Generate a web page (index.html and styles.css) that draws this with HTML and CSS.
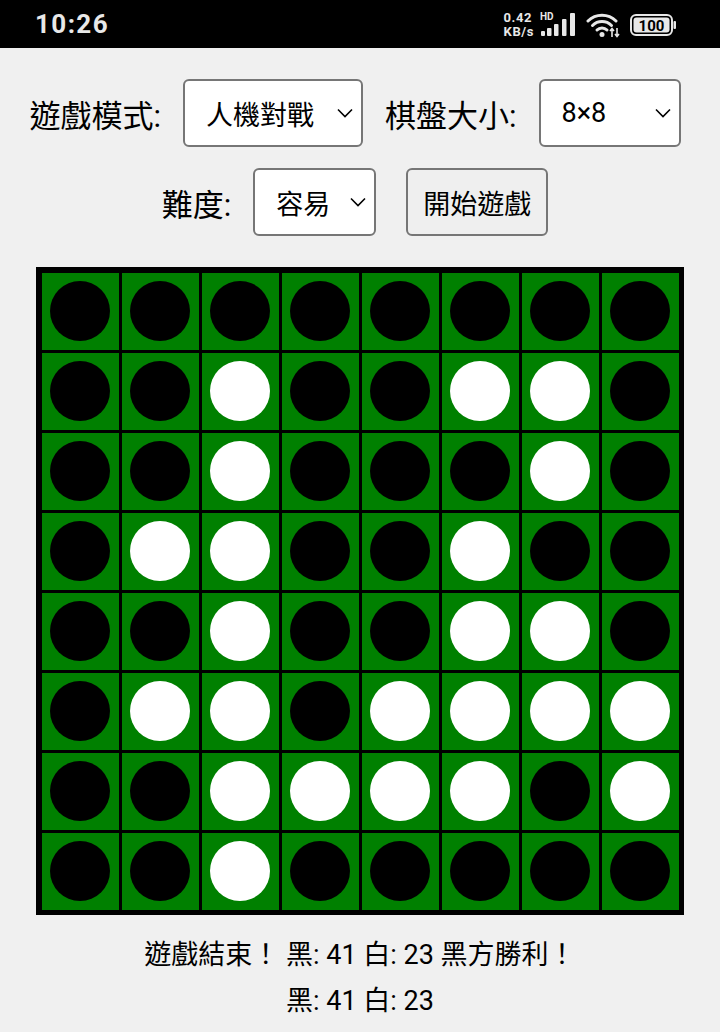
FILE: index.html
```html
<!DOCTYPE html>
<html lang="zh-Hant">
<head>
<meta charset="utf-8">
<title>黑白棋</title>
<link rel="stylesheet" href="styles.css">
</head>
<body>
<div class="statusbar">
  <span class="time">10:26</span>
  <div class="status-right">
    <div class="netspeed"><span>0.42</span><span>KB/s</span></div>
    <svg class="signal" width="38" height="28" viewBox="0 0 38 28">
      <text x="0" y="9" class="hd">HD</text>
      <rect x="1" y="20" width="4" height="5" rx="1" fill="#e8e8e8"/>
      <rect x="7" y="17" width="4.5" height="8" rx="1" fill="#e8e8e8"/>
      <rect x="14" y="13" width="4.5" height="12" rx="1" fill="#e8e8e8"/>
      <rect x="22" y="8" width="4.5" height="17" rx="1" fill="#e8e8e8"/>
      <rect x="30" y="2" width="5" height="23" rx="1" fill="#e8e8e8"/>
    </svg>
    <svg class="wifi" width="34" height="26" viewBox="0 0 34 26">
      <path d="M2 9 A20 20 0 0 1 30 9" fill="none" stroke="#e8e8e8" stroke-width="3" stroke-linecap="round"/>
      <path d="M6.5 13.5 A13.5 13.5 0 0 1 25.5 13.5" fill="none" stroke="#e8e8e8" stroke-width="3" stroke-linecap="round"/>
      <path d="M11 18 A7 7 0 0 1 21 18" fill="none" stroke="#e8e8e8" stroke-width="3" stroke-linecap="round"/>
      <circle cx="16" cy="22.5" r="2.5" fill="#e8e8e8"/>
      <path d="M26 25 V17 M24 19 L26 16.5 L28 19" fill="none" stroke="#e8e8e8" stroke-width="1.6"/>
      <path d="M31 16 V24 M29 22 L31 24.5 L33 22" fill="none" stroke="#e8e8e8" stroke-width="1.6"/>
    </svg>
    <svg class="battery" width="47" height="22" viewBox="0 0 47 22">
      <rect x="1" y="1" width="41" height="20" rx="5" fill="none" stroke="#e8e8e8" stroke-width="2"/>
      <rect x="3.5" y="3.5" width="36" height="15" rx="3" fill="#e8e8e8"/>
      <rect x="43.5" y="7" width="2.5" height="8" rx="1" fill="#e8e8e8"/>
      <text x="21.5" y="16.5" class="batt-text">100</text>
    </svg>
  </div>
</div>

<main class="app">
  <div class="controls">
    <div class="row">
      <span class="label">遊戲模式:</span>
      <div class="select w-mode"><span class="val">人機對戰</span><svg viewBox="0 0 16 10"><polyline points="1,1.5 8,8.5 15,1.5" fill="none" stroke="#000" stroke-width="1.6"/></svg></div>
      <span class="label">棋盤大小:</span>
      <div class="select w-size"><span class="val">8×8</span><svg viewBox="0 0 16 10"><polyline points="1,1.5 8,8.5 15,1.5" fill="none" stroke="#000" stroke-width="1.6"/></svg></div>
    </div>
    <div class="row">
      <span class="label">難度:</span>
      <div class="select w-diff"><span class="val">容易</span><svg viewBox="0 0 16 10"><polyline points="1,1.5 8,8.5 15,1.5" fill="none" stroke="#000" stroke-width="1.6"/></svg></div>
      <button class="btn">開始遊戲</button>
    </div>
  </div>

  <div class="board">
    <div class="cell"><i class="disc b"></i></div><div class="cell"><i class="disc b"></i></div><div class="cell"><i class="disc b"></i></div><div class="cell"><i class="disc b"></i></div><div class="cell"><i class="disc b"></i></div><div class="cell"><i class="disc b"></i></div><div class="cell"><i class="disc b"></i></div><div class="cell"><i class="disc b"></i></div>
    <div class="cell"><i class="disc b"></i></div><div class="cell"><i class="disc b"></i></div><div class="cell"><i class="disc w"></i></div><div class="cell"><i class="disc b"></i></div><div class="cell"><i class="disc b"></i></div><div class="cell"><i class="disc w"></i></div><div class="cell"><i class="disc w"></i></div><div class="cell"><i class="disc b"></i></div>
    <div class="cell"><i class="disc b"></i></div><div class="cell"><i class="disc b"></i></div><div class="cell"><i class="disc w"></i></div><div class="cell"><i class="disc b"></i></div><div class="cell"><i class="disc b"></i></div><div class="cell"><i class="disc b"></i></div><div class="cell"><i class="disc w"></i></div><div class="cell"><i class="disc b"></i></div>
    <div class="cell"><i class="disc b"></i></div><div class="cell"><i class="disc w"></i></div><div class="cell"><i class="disc w"></i></div><div class="cell"><i class="disc b"></i></div><div class="cell"><i class="disc b"></i></div><div class="cell"><i class="disc w"></i></div><div class="cell"><i class="disc b"></i></div><div class="cell"><i class="disc b"></i></div>
    <div class="cell"><i class="disc b"></i></div><div class="cell"><i class="disc b"></i></div><div class="cell"><i class="disc w"></i></div><div class="cell"><i class="disc b"></i></div><div class="cell"><i class="disc b"></i></div><div class="cell"><i class="disc w"></i></div><div class="cell"><i class="disc w"></i></div><div class="cell"><i class="disc b"></i></div>
    <div class="cell"><i class="disc b"></i></div><div class="cell"><i class="disc w"></i></div><div class="cell"><i class="disc w"></i></div><div class="cell"><i class="disc b"></i></div><div class="cell"><i class="disc w"></i></div><div class="cell"><i class="disc w"></i></div><div class="cell"><i class="disc w"></i></div><div class="cell"><i class="disc w"></i></div>
    <div class="cell"><i class="disc b"></i></div><div class="cell"><i class="disc b"></i></div><div class="cell"><i class="disc w"></i></div><div class="cell"><i class="disc w"></i></div><div class="cell"><i class="disc w"></i></div><div class="cell"><i class="disc w"></i></div><div class="cell"><i class="disc b"></i></div><div class="cell"><i class="disc w"></i></div>
    <div class="cell"><i class="disc b"></i></div><div class="cell"><i class="disc b"></i></div><div class="cell"><i class="disc w"></i></div><div class="cell"><i class="disc b"></i></div><div class="cell"><i class="disc b"></i></div><div class="cell"><i class="disc b"></i></div><div class="cell"><i class="disc b"></i></div><div class="cell"><i class="disc b"></i></div>
  </div>

  <p class="msg">遊戲結束！ 黑: 41 白: 23 黑方勝利！</p>
  <p class="msg">黑: 41 白: 23</p>
</main>
</body>
</html>
```

FILE: styles.css
```css
* { box-sizing: border-box; }

body {
  margin: 0;
  background: #f0f0f0;
  font-family: Roboto, "Noto Sans CJK TC", sans-serif;
  color: #000;
}

.statusbar {
  height: 48px;
  background: #000;
  color: #e8e8e8;
  display: flex;
  align-items: center;
  padding-left: 35px;
}

.time {
  font-size: 26px;
  font-weight: 700;
  letter-spacing: 1.4px;
}

.status-right {
  margin-left: auto;
  margin-right: 43px;
  display: flex;
  align-items: center;
}

.netspeed {
  display: flex;
  flex-direction: column;
  font-size: 13px;
  font-weight: 700;
  line-height: 14px;
  letter-spacing: 0.6px;
  margin-top: 2px;
}

.signal { margin-left: 6px; margin-top: 2px; }
.hd { font-family: Roboto, sans-serif; font-size: 10px; font-weight: 700; fill: #e8e8e8; }
.wifi { margin-left: 8px; margin-top: 1px; }
.battery { margin-left: 10px; margin-top: 2px; }
.batt-text { font-family: Roboto, sans-serif; font-size: 15px; font-weight: 700; fill: #000; text-anchor: middle; }

.controls {
  padding: 31px 10px 0 0;
  display: flex;
  flex-direction: column;
  gap: 21px;
}

.row {
  display: flex;
  justify-content: center;
  align-items: center;
  gap: 22px;
}

.label {
  font-size: 31px;
  white-space: nowrap;
}

.select {
  height: 68px;
  border: 2px solid #767676;
  border-radius: 6px;
  background: #fff;
  display: flex;
  align-items: center;
  padding: 0 8px 0 21px;
  font-size: 27px;
}

.select .val { flex: 1; white-space: nowrap; }
.select svg { width: 16px; height: 10px; flex: none; }

.w-mode { width: 180px; }
.w-size { width: 142px; }
.w-diff { width: 123px; }

.btn {
  height: 68px;
  margin-left: 8px;
  padding: 0 15px;
  border: 2px solid #767676;
  border-radius: 6px;
  background: #efefef;
  font-family: inherit;
  font-size: 27px;
  color: #000;
}

.board {
  width: 648px;
  margin: 31px auto 0;
  background: #000;
  padding: 5.5px;
  display: grid;
  grid-template-columns: repeat(8, 77px);
  grid-auto-rows: 77px;
  gap: 3px;
}

.cell {
  background: #008000;
  display: flex;
  align-items: center;
  justify-content: center;
}

.disc {
  width: 60px;
  height: 60px;
  border-radius: 50%;
}

.disc.b { background: #000; }
.disc.w { background: #fff; }

.msg {
  margin: 0;
  text-align: center;
  font-size: 27px;
  line-height: 46px;
}

.board + .msg { margin-top: 17px; }
```
